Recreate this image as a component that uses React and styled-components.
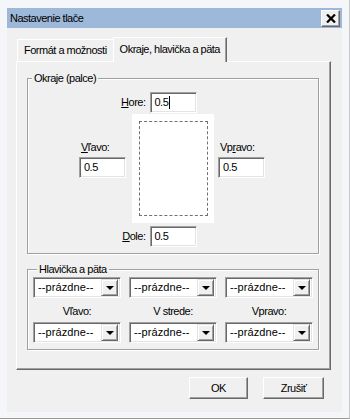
import React from 'react';
import styled, { createGlobalStyle } from 'styled-components';

const Global = createGlobalStyle`
  html, body { margin: 0; padding: 0; background: #f4f6f9; }
  body {
    font-family: "Liberation Sans", Arial, sans-serif;
    font-size: 11px;
    letter-spacing: -0.5px;
    color: #000;
  }
  * { box-sizing: border-box; }
`;

const Window = styled.div`
  width: 350px;
  height: 419px;
  background: #f4f6f9;
  padding: 8px 7px 6px 7px;
  display: flex;
  flex-direction: column;
  border-bottom: 1px solid #9a9a9a;
  border-right: 1px solid #c8c8c8;
`;

const TitleBar = styled.div`
  height: 20px;
  background: #9db8d8;
  display: flex;
  align-items: center;
  justify-content: space-between;
  padding: 0 2px 0 3px;
`;

const Title = styled.span`
  font-size: 11px;
  line-height: 13px;
`;

const CloseBtn = styled.div`
  width: 19px;
  height: 17px;
  margin-top: 1px;
  background: #f0f0f0;
  border-top: 1px solid #fff;
  border-left: 1px solid #fff;
  border-right: 1px solid #696969;
  border-bottom: 1px solid #696969;
  box-shadow: inset -1px -1px 0 #a0a0a0;
  display: flex;
  align-items: center;
  justify-content: center;
`;

const Client = styled.div`
  flex: 1;
  background: #f0f0f0;
  padding: 8px 11px 0 9px;
  display: flex;
  flex-direction: column;
`;

const TabStrip = styled.div`
  display: flex;
  align-items: flex-end;
  height: 25px;
  padding-left: 1px;
  position: relative;
  z-index: 1;
`;

const Tab = styled.div`
  height: ${p => (p.$active ? 25 : 22)}px;
  padding: 0 6px;
  display: flex;
  align-items: center;
  padding-bottom: ${p => (p.$active ? 2 : 0)}px;
  background: #f0f0f0;
  border-top: 1px solid #fff;
  border-left: 1px solid #fff;
  border-right: ${p => (p.$active ? '1px solid #696969' : 'none')};
  box-shadow: ${p => (p.$active ? 'inset -1px 0 0 #a0a0a0' : 'none')};
  margin-bottom: ${p => (p.$active ? -1 : 0)}px;
  line-height: 13px;
`;

const Panel = styled.div`
  height: 309px;
  background: #f0f0f0;
  border-top: 1px solid #fff;
  border-left: 1px solid #fff;
  border-right: 1px solid #696969;
  border-bottom: 1px solid #696969;
  box-shadow: inset -1px -1px 0 #a0a0a0;
  padding: 10px 11px 0 10px;
  display: flex;
  flex-direction: column;
  gap: 9px;
`;

const Group = styled.fieldset`
  margin: 0;
  border: 1px solid #a0a0a0;
  box-shadow: inset 1px 1px 0 #fff, 1px 1px 0 #fff;
  padding: ${p => p.$pad};
  min-width: 0;
`;

const Legend = styled.legend`
  padding: 0 2px;
  margin-left: 4px;
  line-height: 13px;
  background: #f0f0f0;
`;

const CenterRow = styled.div`
  display: grid;
  grid-template-columns: 1fr 47px 1fr;
  align-items: center;
`;

const SideLabel = styled.label`
  justify-self: end;
  padding-right: 4px;
  line-height: 13px;
`;

const Key = styled.span`
  text-decoration: underline;
  text-underline-offset: 1px;
`;

const Field = styled.div`
  width: ${p => p.$w || 47}px;
  height: 21px;
  background: #fff;
  border-top: 1px solid #a0a0a0;
  border-left: 1px solid #a0a0a0;
  border-right: 1px solid #fff;
  border-bottom: 1px solid #fff;
  box-shadow: inset 1px 1px 0 #696969, inset -1px -1px 0 #e3e3e3;
  padding: 0 4px;
  display: flex;
  align-items: center;
  line-height: 13px;
`;

const Caret = styled.span`
  display: inline-block;
  width: 1px;
  height: 13px;
  background: #000;
  margin-left: 1px;
`;

const MiddleRow = styled.div`
  display: grid;
  grid-template-columns: 1fr 82px 1fr;
  margin: 1px 0 3px;
`;

const SideCell = styled.div`
  justify-self: ${p => (p.$left ? 'end' : 'start')};
  padding: 27px ${p => (p.$left ? '6px' : '0')} 0 ${p => (p.$left ? '0' : '4px')};
  display: flex;
  flex-direction: column;
  gap: 3px;
`;

const CellLabel = styled.label`
  line-height: 13px;
  padding-left: 2px;
`;

const Page = styled.div`
  height: 109px;
  background: #fff;
  padding: 7px 6px 7px 7px;
  display: flex;
`;

const PageMargin = styled.div`
  flex: 1;
  border: 1px dashed #707070;
`;

const ComboGrid = styled.div`
  display: grid;
  grid-template-columns: repeat(3, 88px);
  column-gap: 8px;
  row-gap: 0;
`;

const Combo = styled.div`
  height: 21px;
  background: #fff;
  border-top: 1px solid #a0a0a0;
  border-left: 1px solid #a0a0a0;
  border-right: 1px solid #fff;
  border-bottom: 1px solid #fff;
  box-shadow: inset 1px 1px 0 #696969, inset -1px -1px 0 #e3e3e3;
  padding: 2px 2px 2px 4px;
  display: flex;
  align-items: center;
  justify-content: space-between;
  line-height: 13px;
`;

const ComboText = styled.span`
  letter-spacing: 0.1px;
`;

const DropBtn = styled.div`
  width: 17px;
  height: 17px;
  background: #f0f0f0;
  border-top: 1px solid #e3e3e3;
  border-left: 1px solid #e3e3e3;
  border-right: 1px solid #696969;
  border-bottom: 1px solid #696969;
  box-shadow: inset 1px 1px 0 #fff, inset -1px -1px 0 #a0a0a0;
  display: flex;
  align-items: center;
  justify-content: center;
`;

const Arrow = styled.div`
  width: 0;
  height: 0;
  border-left: 4px solid transparent;
  border-right: 4px solid transparent;
  border-top: 4px solid #000;
`;

const ComboLabel = styled.div`
  height: 24px;
  display: flex;
  align-items: center;
  justify-content: center;
  line-height: 13px;
  padding-top: 2px;
`;

const ButtonRow = styled.div`
  display: flex;
  justify-content: flex-end;
  gap: 15px;
  padding: 7px 7px 0 0;
`;

const Button = styled.div`
  width: ${p => p.$w}px;
  height: 22px;
  background: #f0f0f0;
  border-top: 1px solid #fff;
  border-left: 1px solid #fff;
  border-right: 1px solid #696969;
  border-bottom: 1px solid #696969;
  box-shadow: inset -1px -1px 0 #a0a0a0;
  display: flex;
  align-items: center;
  justify-content: center;
  line-height: 13px;
`;

const ComboBox = () => (
  <Combo>
    <ComboText>--prázdne--</ComboText>
    <DropBtn><Arrow /></DropBtn>
  </Combo>
);

export default function App() {
  return (
    <>
      <Global />
      <Window>
        <TitleBar>
          <Title>Nastavenie tlače</Title>
          <CloseBtn>
            <svg width="10" height="9" viewBox="0 0 10 9">
              <path d="M1 0.5 L9 8.5 M9 0.5 L1 8.5" stroke="#000" strokeWidth="2.2" fill="none" />
            </svg>
          </CloseBtn>
        </TitleBar>
        <Client>
          <TabStrip>
            <Tab>Formát a možnosti</Tab>
            <Tab $active>Okraje, hlavička a päta</Tab>
          </TabStrip>
          <Panel>
            <Group $pad="7px 0 6px 0">
              <Legend>Okraje (palce)</Legend>
              <CenterRow>
                <SideLabel><Key>H</Key>ore:</SideLabel>
                <Field>0.5<Caret /></Field>
              </CenterRow>
              <MiddleRow>
                <SideCell $left>
                  <CellLabel><Key>V</Key>ľavo:</CellLabel>
                  <Field>0.5</Field>
                </SideCell>
                <Page><PageMargin /></Page>
                <SideCell>
                  <CellLabel>Vp<Key>r</Key>avo:</CellLabel>
                  <Field>0.5</Field>
                </SideCell>
              </MiddleRow>
              <CenterRow>
                <SideLabel><Key>D</Key>ole:</SideLabel>
                <Field>0.5</Field>
              </CenterRow>
            </Group>
            <Group $pad="1px 0 6px 5px">
              <Legend>Hlavička a päta</Legend>
              <ComboGrid>
                <ComboBox />
                <ComboBox />
                <ComboBox />
                <ComboLabel>Vľavo:</ComboLabel>
                <ComboLabel>V strede:</ComboLabel>
                <ComboLabel>Vpravo:</ComboLabel>
                <ComboBox />
                <ComboBox />
                <ComboBox />
              </ComboGrid>
            </Group>
          </Panel>
          <ButtonRow>
            <Button $w={59}>OK</Button>
            <Button $w={61}>Zrušiť</Button>
          </ButtonRow>
        </Client>
      </Window>
    </>
  );
}
